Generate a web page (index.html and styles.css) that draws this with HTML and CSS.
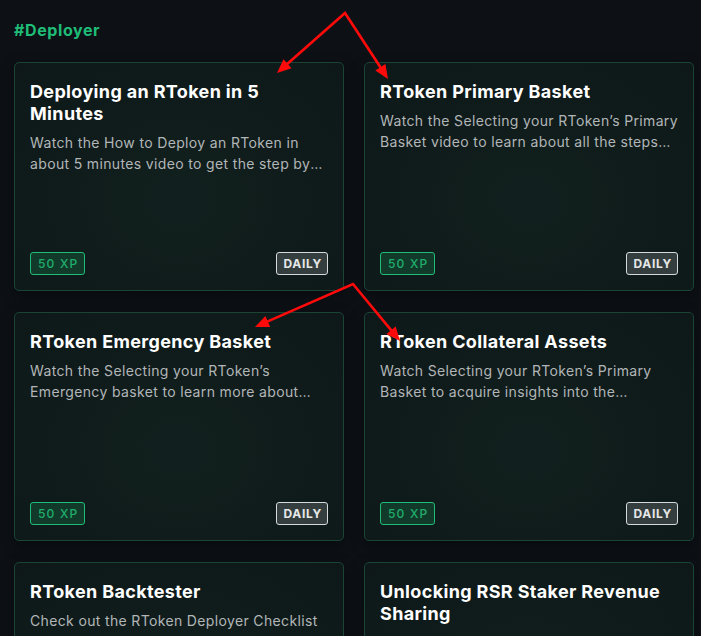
FILE: index.html
```html
<!DOCTYPE html>
<html lang="en">
<head>
<meta charset="utf-8">
<title>Deployer quests</title>
<link rel="stylesheet" href="styles.css">
</head>
<body>
<main class="page">
  <h2 class="section-title">#Deployer</h2>
  <div class="grid">
    <article class="card">
      <h3 class="card-title">Deploying an RToken in 5 Minutes</h3>
      <p class="card-desc">Watch the How to Deploy an RToken in about 5 minutes video to get the step by step guide on deploying.</p>
      <div class="card-foot"><span class="xp">50 XP</span><span class="freq">DAILY</span></div>
    </article>
    <article class="card">
      <h3 class="card-title">RToken Primary Basket</h3>
      <p class="card-desc">Watch the Selecting your RToken’s Primary Basket video to learn about all the steps involved in the process.</p>
      <div class="card-foot"><span class="xp">50 XP</span><span class="freq">DAILY</span></div>
    </article>
    <article class="card">
      <h3 class="card-title">RToken Emergency Basket</h3>
      <p class="card-desc">Watch the Selecting your RToken’s Emergency basket to learn more about how the backup works.</p>
      <div class="card-foot"><span class="xp">50 XP</span><span class="freq">DAILY</span></div>
    </article>
    <article class="card">
      <h3 class="card-title">RToken Collateral Assets</h3>
      <p class="card-desc">Watch Selecting your RToken’s Primary Basket to acquire insights into the collateral assets.</p>
      <div class="card-foot"><span class="xp">50 XP</span><span class="freq">DAILY</span></div>
    </article>
    <article class="card">
      <h3 class="card-title">RToken Backtester</h3>
      <p class="card-desc">Check out the RToken Deployer Checklist and learn how to backtest your basket.</p>
      <div class="card-foot"><span class="xp">50 XP</span><span class="freq">DAILY</span></div>
    </article>
    <article class="card">
      <h3 class="card-title">Unlocking RSR Staker Revenue Sharing</h3>
      <p class="card-desc">Learn how revenue is shared with RSR stakers of your RToken.</p>
      <div class="card-foot"><span class="xp">50 XP</span><span class="freq">DAILY</span></div>
    </article>
  </div>
</main>
<svg class="annotations" width="701" height="636" viewBox="0 0 701 636" aria-hidden="true">
  <g stroke="#ff0a0a" stroke-width="2.6" stroke-linecap="round" fill="none">
    <polyline points="287.5,63.7 345,13 380.4,67.3"/>
    <polyline points="267.8,321.4 353,284 391.1,330.2"/>
  </g>
  <g fill="#ff0a0a">
    <polygon points="277,73 291.5,68.2 283.5,59.2"/>
    <polygon points="388,79 375.3,70.6 385.4,64"/>
    <polygon points="255,327 270.2,326.9 265.4,315.9"/>
    <polygon points="400,341 386.5,334 395.7,326.4"/>
  </g>
</svg>
</body>
</html>
```
FILE: styles.css
```css
html, body {
  margin: 0;
  padding: 0;
  background: #0d1116;
}
body {
  font-family: Inter, "Open Sans", "Liberation Sans", sans-serif;
  color: #fff;
  position: relative;
  height: 636px;
  overflow: hidden;
}
.page {
  padding: 18px 7px 0 14px;
}
.section-title {
  margin: 0 0 20px;
  font-size: 16px;
  line-height: 24px;
  font-weight: 700;
  letter-spacing: 0.6px;
  color: #1fbd77;
}
.grid {
  display: grid;
  grid-template-columns: 330px 330px;
  column-gap: 20px;
  row-gap: 21px;
}
.card {
  box-sizing: border-box;
  height: 229px;
  border: 1px solid #1a4535;
  border-radius: 5px;
  background: radial-gradient(ellipse at 50% 60%, #11201e 0%, #0f1b1a 60%, #0e1819 100%);
  box-shadow: 0 4px 14px rgba(0, 0, 0, 0.45);
  padding: 18px 15px 15px 15px;
  display: flex;
  flex-direction: column;
}
.card-title {
  margin: 0;
  font-size: 18px;
  line-height: 22px;
  font-weight: 700;
  color: #ffffff;
  letter-spacing: 0.35px;
}
.card-desc {
  margin: 7px 0 0;
  font-size: 14px;
  line-height: 21px;
  color: #b2b6b8;
  letter-spacing: 0.35px;
  display: -webkit-box;
  -webkit-line-clamp: 2;
  -webkit-box-orient: vertical;
  overflow: hidden;
}
.card-foot {
  margin-top: auto;
  display: flex;
  justify-content: space-between;
  align-items: center;
}
.xp, .freq {
  box-sizing: border-box;
  height: 23px;
  display: inline-flex;
  align-items: center;
  border-radius: 3px;
  font-size: 12px;
}
.xp {
  padding: 0 6px 0 7px;
  border: 1px solid #1fbd77;
  background: #123a2a;
  color: #1fae6d;
  font-weight: 500;
  letter-spacing: 1.2px;
}
.freq {
  padding: 0 5px 0 6px;
  border: 1px solid #d6dadb;
  background: #343e3e;
  color: #e6e8e8;
  font-weight: 700;
  letter-spacing: 0.7px;
}
.annotations {
  position: absolute;
  left: 0;
  top: 0;
  pointer-events: none;
}
```
